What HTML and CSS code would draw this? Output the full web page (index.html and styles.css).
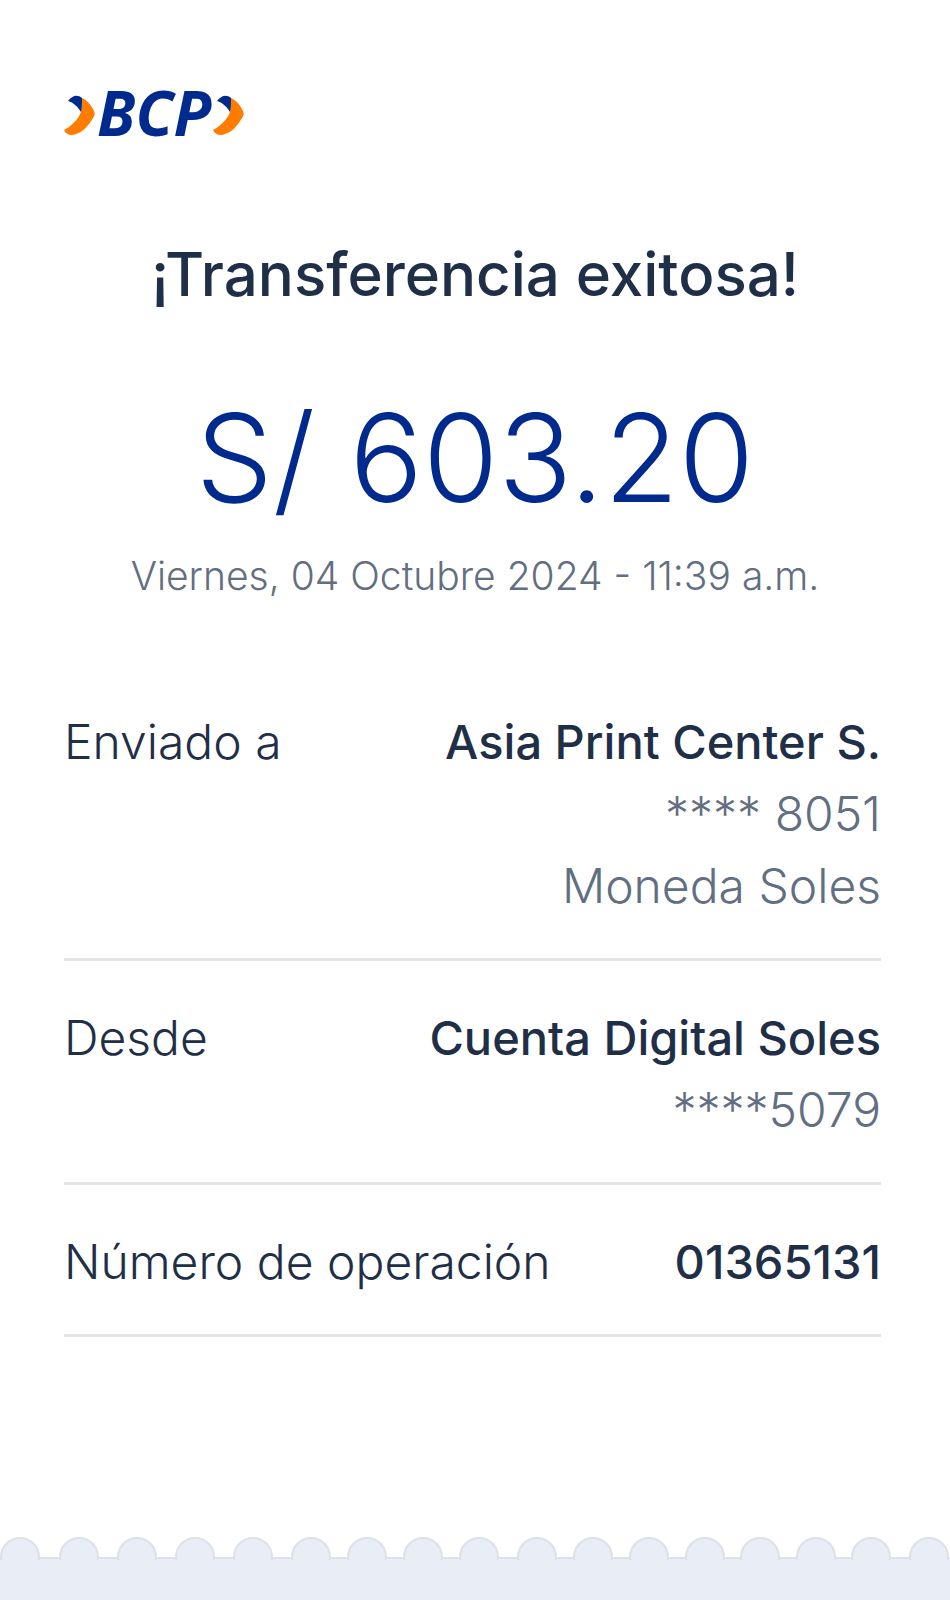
FILE: index.html
```html
<!DOCTYPE html>
<html lang="es">

<head>
    <meta charset="UTF-8">
    <meta name="viewport" content="width=device-width, initial-scale=1.0">
    <title>Transferencia exitosa</title>
    <link rel="stylesheet" href="styles.css">
</head>

<body>

    <main class="receipt">
        <svg class="logo" viewBox="0 0 182 50" role="img" aria-label="BCP">
            <defs>
                <g id="arrow">
                    <path class="orange" d="M18 2C23 4 27 9 30 15C31 17 31 19 29 22C25 29 19 36 12 38C8 40 2 39 0 34C7 30 14 24 17 16Z" />
                    <path class="blue" d="M4 5C8 0 13 -2 18 2C18 7 18 12 17 16C14 11 10 7 4 5Z" />
                </g>
            </defs>
            <use href="#arrow" x="0" y="8" />
            <text class="logo-text" x="33" y="48">BCP</text>
            <use href="#arrow" x="149" y="8" />
        </svg>

        <h1>¡Transferencia exitosa!</h1>
        <p class="amount">S/ 603.20</p>
        <p class="date">Viernes, 04 Octubre 2024 - 11:39 a.m.</p>

        <dl class="details">
            <div class="row">
                <dt>Enviado a</dt>
                <dd><strong>Asia Print Center S.</strong></dd>
                <dd>**** 8051</dd>
                <dd>Moneda Soles</dd>
            </div>
            <div class="row">
                <dt>Desde</dt>
                <dd><strong>Cuenta Digital Soles</strong></dd>
                <dd>****5079</dd>
            </div>
            <div class="row">
                <dt>Número de operación</dt>
                <dd><strong>01365131</strong></dd>
            </div>
        </dl>
    </main>

    <footer class="edge">
        <svg class="scallops" viewBox="0 0 950 24" aria-hidden="true">
            <path d="M0 22H950" />
            <circle cx="20" cy="21" r="19" />
            <circle cx="79" cy="21" r="19" />
            <circle cx="137" cy="21" r="19" />
            <circle cx="195" cy="21" r="19" />
            <circle cx="253" cy="21" r="19" />
            <circle cx="311" cy="21" r="19" />
            <circle cx="367" cy="21" r="19" />
            <circle cx="423" cy="21" r="19" />
            <circle cx="479" cy="21" r="19" />
            <circle cx="537" cy="21" r="19" />
            <circle cx="593" cy="21" r="19" />
            <circle cx="649" cy="21" r="19" />
            <circle cx="705" cy="21" r="19" />
            <circle cx="760" cy="21" r="19" />
            <circle cx="816" cy="21" r="19" />
            <circle cx="871" cy="21" r="19" />
            <circle cx="929" cy="21" r="19" />
        </svg>
    </footer>

</body>

</html>
```
FILE: styles.css
```css
* {
    box-sizing: border-box;
}

body {
    margin: 0;
    min-height: 100vh;
    display: flex;
    flex-direction: column;
    background-color: #fff;
    color: #1f2f47;
    font-family: Inter, sans-serif;
    font-weight: 300;
}

.receipt {
    flex: 1;
    padding-top: 88px;
}

.logo {
    display: block;
    width: 182px;
    height: 50px;
    margin-left: 64px;
    overflow: visible;
}

.logo-text {
    font-family: "Open Sans", sans-serif;
    font-size: 62px;
    font-weight: 700;
    font-style: italic;
    fill: #002a8d;
}

.orange {
    fill: #ff7c00;
}

.blue {
    fill: #002a8d;
}

h1 {
    margin: 96px 0 0;
    font-size: 60px;
    line-height: 80px;
    font-weight: 500;
    text-align: center;
}

.amount {
    margin: 76px 0 0;
    font-size: 122px;
    line-height: 136px;
    color: #002a8d;
    text-align: center;
}

.date {
    margin: 22px 0 0;
    font-size: 39px;
    line-height: 56px;
    color: #626e82;
    text-align: center;
}

.details {
    margin: 61px 69px 0 64px;
    font-size: 48px;
    line-height: 72px;
}

.row {
    display: grid;
    grid-template-columns: auto 1fr;
    padding: 41px 0 36px;
    border-bottom: 3px solid #e6e6e6;
}

dt {
    grid-column: 1;
}

dd {
    grid-column: 2;
    margin: 0;
    color: #626e82;
    text-align: right;
}

strong {
    color: #1f2f47;
    font-size: 47px;
    font-weight: 500;
}

/* torn paper edge at the bottom */
.edge {
    padding-bottom: 40px;
    background: linear-gradient(#fff 22px, #e9edf5 22px);
}

.scallops {
    display: block;
    width: 100%;
    fill: #e9edf5;
    stroke: #dde1e9;
    stroke-width: 2;
}
```
